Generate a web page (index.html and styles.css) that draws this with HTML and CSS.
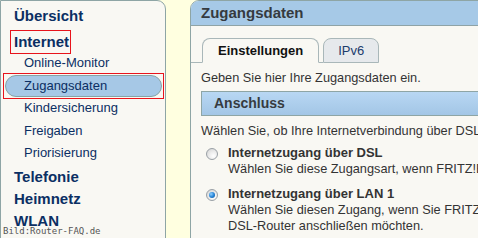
FILE: index.html
```html
<!DOCTYPE html>
<html lang="de">
<head>
<meta charset="utf-8">
<title>Zugangsdaten</title>
<link rel="stylesheet" href="styles.css">
</head>
<body>
<div class="page">
  <nav class="sidebar">
    <div class="top first">Übersicht</div>
    <div class="top internet"><span class="mark">Internet</span></div>
    <ul class="sub">
      <li><span class="item">Online-Monitor</span></li>
      <li class="marked"><span class="item active">Zugangsdaten</span></li>
      <li><span class="item">Kindersicherung</span></li>
      <li><span class="item">Freigaben</span></li>
      <li><span class="item">Priorisierung</span></li>
    </ul>
    <div class="top telefonie">Telefonie</div>
    <div class="top">Heimnetz</div>
    <div class="top">WLAN</div>
  </nav>
  <main class="main">
    <div class="head">Zugangsdaten</div>
    <div class="content">
      <div class="tabs">
        <span class="tabline"></span>
        <span class="tab active">Einstellungen</span>
        <span class="tabgap"></span>
        <span class="tab">IPv6</span>
      </div>
      <p class="intro">Geben Sie hier Ihre Zugangsdaten ein.</p>
      <div class="section">Anschluss</div>
      <p class="lead">Wählen Sie, ob Ihre Internetverbindung über DSL oder über einen anderen Anschluss hergestellt werden soll.</p>
      <div class="option first-option">
        <span class="radio"></span>
        <div class="opt-text">
          <div class="opt-label">Internetzugang über DSL</div>
          <div>Wählen Sie diese Zugangsart, wenn FRITZ!Box direkt am DSL-Anschluss angeschlossen ist.</div>
        </div>
      </div>
      <div class="option">
        <span class="radio checked"></span>
        <div class="opt-text">
          <div class="opt-label">Internetzugang über LAN 1</div>
          <div>Wählen Sie diesen Zugang, wenn Sie FRITZ!Box an ein Kabelmodem oder einen vorhandenen</div>
          <div>DSL-Router anschließen möchten.</div>
        </div>
      </div>
    </div>
  </main>
</div>
<div class="watermark">Bild:Router-FAQ.de</div>
</body>
</html>
```
FILE: styles.css
```css
html, body {
  margin: 0;
  padding: 0;
}
body {
  width: 478px;
  height: 238px;
  overflow: hidden;
  background: #ffffe0;
  font-family: "Liberation Sans", Arial, sans-serif;
  position: relative;
}
.page {
  display: flex;
  gap: 24px;
  width: 540px;
  height: 300px;
}
.sidebar {
  width: 164px;
  flex: none;
  box-sizing: content-box;
  background: #f9f8f3;
  border: 1px solid #8ea5a5;
  border-top-right-radius: 9px;
  padding-top: 4px;
  color: #0b2f63;
}
.top {
  height: 22px;
  line-height: 22px;
  padding-left: 13px;
  font-size: 15px;
  font-weight: bold;
  white-space: nowrap;
}
.top.internet {
  height: 24px;
  line-height: 22px;
  margin-top: 3px;
}
.mark {
  display: inline-block;
  border: 1px solid #e8141c;
  padding: 0 1px 0 3px;
  margin-left: -4px;
  line-height: 22px;
}
.top.telefonie {
  margin-top: 1.5px;
}
.sub {
  list-style: none;
  margin: -2px 0 0 0;
  padding: 0;
}
.sub li {
  height: 22.5px;
}
.sub li.marked {
  box-sizing: border-box;
  height: 26px;
  margin: -1.75px 1px -1.75px 2px;
  border: 1px solid #e8141c;
  padding: 1px;
}
.item {
  display: block;
  margin: 0 3px 0 4px;
  height: 20px;
  line-height: 20px;
  border: 1px solid transparent;
  border-radius: 11px;
  padding-left: 18px;
  font-size: 13px;
  white-space: nowrap;
}
.item.active {
  margin: 0;
  background: #a6c8e6;
  border-color: #86a2a6;
}
.main {
  flex: 1;
  background: #f9f8f3;
  border: 1px solid #8ea5a5;
  border-top-left-radius: 9px;
  overflow: hidden;
  color: #333;
}
.head {
  height: 24px;
  line-height: 24px;
  background: #a6c9e7;
  border-bottom: 1px solid #8fa3a6;
  padding-left: 10px;
  font-size: 15px;
  font-weight: bold;
  color: #353a40;
  white-space: nowrap;
}
.content {
  padding: 0 0 0 10px;
  font-size: 12.75px;
  white-space: nowrap;
}
.tabs {
  display: flex;
  align-items: flex-end;
  margin: 12px 0 0 -10px;
  height: 25px;
}
.tabline {
  width: 11px;
  border-bottom: 1px solid #a9b7b9;
}
.tabgap {
  width: 4px;
  border-bottom: 1px solid #a9b7b9;
}
.tab {
  box-sizing: border-box;
  height: 25px;
  line-height: 24px;
  border: 1px solid #a9b7b9;
  border-radius: 8px 8px 0 0;
  padding: 0 14px;
  font-size: 13px;
  color: #1c3c6c;
  background: #e6e9ec;
}
.tab.active {
  border-bottom-color: transparent;
  background: #f9f8f3;
  color: #111;
  font-weight: bold;
  padding: 0 15px;
}
p {
  margin: 0;
  line-height: 16px;
}
.intro {
  margin-top: 7px;
}
.section {
  margin-top: 5px;
  height: 23px;
  line-height: 23px;
  border: 1px solid #8ea5a5;
  border-right: none;
  background: linear-gradient(#b8d7f3, #a3c6e6);
  padding-left: 12px;
  font-size: 14px;
  font-weight: bold;
  color: #363b40;
}
.lead {
  margin-top: 7px;
}
.option {
  display: flex;
  align-items: flex-start;
  line-height: 16px;
  margin-top: 9px;
}
.option.first-option {
  margin-top: 6px;
}
.opt-label {
  font-weight: bold;
  font-size: 13px;
}
.radio {
  flex: none;
  box-sizing: border-box;
  width: 12px;
  height: 12px;
  margin: 3px 10px 0 5px;
  border-radius: 50%;
  border: 1px solid #9aa0a6;
  background: radial-gradient(circle at 65% 70%, #ffffff 0, #ececec 45%, #cfcfcf 100%);
  position: relative;
}
.radio.checked::after {
  content: "";
  position: absolute;
  left: 2px;
  top: 2px;
  width: 6px;
  height: 6px;
  border-radius: 50%;
  background: radial-gradient(circle at 35% 35%, #8fd0ff 0, #2a86d8 50%, #0b4f92 100%);
}
.watermark {
  position: absolute;
  left: 3px;
  top: 225px;
  font-family: "DejaVu Sans Mono", monospace;
  font-size: 9px;
  line-height: 12px;
  color: #555;
  white-space: nowrap;
}
```
